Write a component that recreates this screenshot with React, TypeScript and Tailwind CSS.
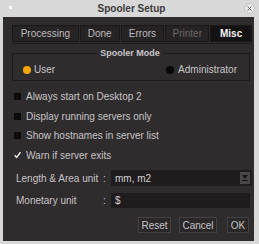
import React from "react";

function Tab({ label, w, active, disabled }: { label: string; w: string; active?: boolean; disabled?: boolean }) {
  return (
    <div
      className={`${w} h-[17px] flex items-center justify-center border border-[#1a1819] ${
        active ? "bg-[#141213] text-[#f2f2f2] font-bold" : "bg-[#262325] " + (disabled ? "text-[#6b6869]" : "text-[#bdbbbc]")
      }`}
    >
      {label}
    </div>
  );
}

function Check({ label, checked }: { label: string; checked?: boolean }) {
  return (
    <div className="h-[19.5px] flex items-center">
      <div className="w-[7px] h-[7px] ml-[11px] flex items-center justify-center">
        {checked ? (
          <svg width="8" height="8" viewBox="0 0 8 8">
            <path d="M0.8 4.2 L3 6.8 L7.4 0.8" stroke="#e8e8e8" strokeWidth="1.6" fill="none" />
          </svg>
        ) : (
          <div className="w-[7px] h-[7px] bg-[#0c0b0b]" />
        )}
      </div>
      <span className="ml-[5px]">{label}</span>
    </div>
  );
}

export default function App() {
  return (
    <div
      className="w-[259px] h-[244px] bg-[#d8d8d8] flex flex-col text-[10px] text-[#c6c4c5]"
      style={{ fontFamily: '"Liberation Sans", Arial, sans-serif' }}
    >
      <div className="h-[17px] relative flex items-center justify-center">
        <div className="absolute left-[9px] top-[6px] w-[3px] h-[3px] bg-white" />
        <span className="font-bold text-[#3c3a3b] text-[10px] ml-[4px]">Spooler Setup</span>
        <div className="absolute right-[4px] top-[3px] w-[11px] h-[11px] rounded-full bg-[#e6e6e6] border border-[#c4c4c4] flex items-center justify-center">
          <svg width="5" height="5" viewBox="0 0 5 5">
            <path d="M0.5 0.5 L4.5 4.5 M4.5 0.5 L0.5 4.5" stroke="#777" strokeWidth="1" />
          </svg>
        </div>
      </div>
      <div className="flex-1 ml-[3px] mr-[5px] mb-[3px] bg-[#2f2c2e] flex flex-col pl-[9px] pr-[2px] pt-[8px]">
        <div className="flex gap-[1px] border-b border-[#1c1a1b] pb-[1px]">
          <Tab label="Processing" w="w-[67px]" />
          <Tab label="Done" w="w-[40px]" />
          <Tab label="Errors" w="w-[44px]" />
          <Tab label="Printer" w="w-[44px]" disabled />
          <Tab label="Misc" w="w-[42px]" active />
        </div>
        <fieldset className="mt-[4px] mr-[2px] border border-[#1d1b1c] h-[33px] pl-[10px] pr-[12px] flex">
          <legend className="mx-auto px-[3px] text-[9px] font-bold text-[#c9c7c8] leading-[10px]">Spooler Mode</legend>
          <div className="flex items-center justify-between w-full h-[27px] -mt-[2px]">
            <div className="flex items-center">
              <div className="w-[8px] h-[8px] rounded-full bg-[#f7a600]" />
              <span className="ml-[3px]">User</span>
            </div>
            <div className="flex items-center">
              <div className="w-[8px] h-[8px] rounded-full bg-[#070707]" />
              <span className="ml-[4px]">Administrator</span>
            </div>
          </div>
        </fieldset>
        <div className="flex flex-col mt-[6px] -ml-[9px]">
          <Check label="Always start on Desktop 2" />
          <Check label="Display running servers only" />
          <Check label="Show hostnames in server list" />
          <Check label="Warn if server exits" checked />
        </div>
        <div className="flex items-center mt-[5px] -ml-[9px] h-[16px]">
          <span className="ml-[13px] w-[87px]">Length &amp; Area unit</span>
          <span className="w-[8px]">:</span>
          <div className="flex-1 h-[16px] bg-[#1f1c1e] flex items-center justify-between pl-[4px] pr-[2px]">
            <span className="text-[#d2d0d1]">mm, m2</span>
            <div className="w-[10px] h-[12px] bg-[#4a4748] flex flex-col items-center justify-center gap-[1px]">
              <svg width="6" height="4" viewBox="0 0 6 4">
                <path d="M0 0 L6 0 L3 4 Z" fill="#151314" />
              </svg>
              <div className="w-[6px] h-[1px] bg-[#151314]" />
            </div>
          </div>
        </div>
        <div className="flex items-center mt-[7px] -ml-[9px] h-[15px]">
          <span className="ml-[13px] w-[87px]">Monetary unit</span>
          <span className="w-[8px]">:</span>
          <div className="flex-1 h-[15px] bg-[#1f1c1e] flex items-center pl-[4px] mr-[2px]">
            <span className="text-[#d2d0d1]">$</span>
          </div>
        </div>
        <div className="flex justify-end mt-[9px] pr-[3px]">
          <div className="w-[33px] h-[16px] border border-[#444142] bg-[#2a2729] flex items-center justify-center">Reset</div>
          <div className="ml-[8px] w-[38px] h-[16px] border border-[#444142] bg-[#2a2729] flex items-center justify-center">Cancel</div>
          <div className="ml-[10px] w-[22px] h-[16px] border border-[#444142] bg-[#2a2729] flex items-center justify-center">OK</div>
        </div>
      </div>
    </div>
  );
}
